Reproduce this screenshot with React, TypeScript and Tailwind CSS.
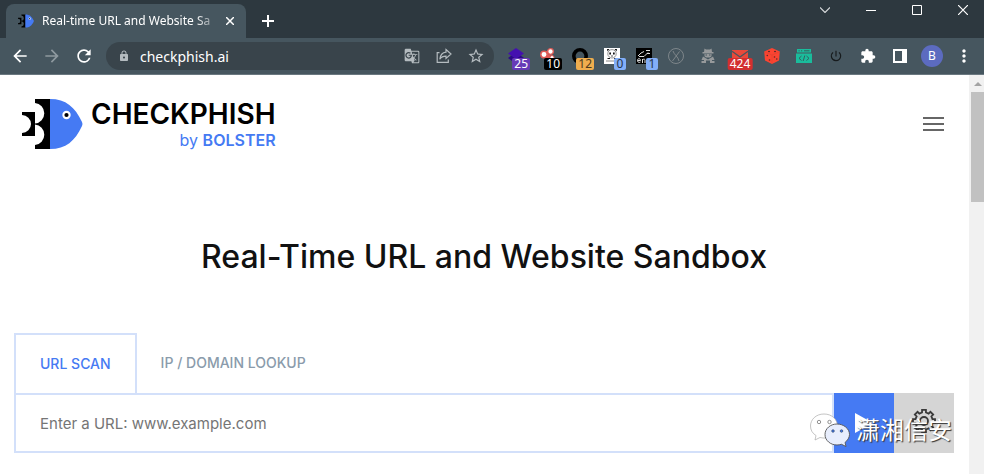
import React from "react";
import {
  MdArrowBack,
  MdArrowForward,
  MdExtension,
  MdGTranslate,
  MdLock,
  MdMoreVert,
  MdPowerSettingsNew,
  MdRefresh,
  MdStarBorder,
} from "react-icons/md";

const FishMark = ({ className }: { className?: string }) => (
  <svg viewBox="0 0 61 50" className={className} aria-hidden="true">
    <path
      d="M13 0H29V50H13V46A10.300 10.300 0 0 0 13 25.500V37H0V34A9 9 0 0 0 0 16V13H13V24.500A10.300 10.300 0 0 0 13 4Z"
      fill="#000"
    />
    <path d="M28 0C44 0 53 8 60 23Q61 25 60 27C53 42 44 50 28 50Z" fill="#457af3" />
    <circle cx="44.500" cy="16" r="4.200" fill="#fff" />
    <circle cx="44.500" cy="16" r="2.100" fill="#000" />
  </svg>
);

const ShareIcon = () => (
  <svg viewBox="0 0 16 16" className="size-4" fill="none" stroke="#b4bbbf" strokeWidth="1.200">
    <path d="M3.500 4.700H1.200V14.300H12.300V11.500" />
    <path d="M10 1.500L15 6L10 10.500V8.200C7 8.200 5 9.300 3.800 11.300C4.200 7.500 6.300 4.600 10 4.200Z" />
  </svg>
);

// outline of a cog with eight teeth, centred on 12,12
const cogPoints = Array.from({ length: 8 }, (_, i) =>
  [
    [-13, 8.7],
    [-10, 11.2],
    [10, 11.2],
    [13, 8.7],
  ].map(([offset, r]) => {
    const a = ((i * 45 + offset) * Math.PI) / 180;
    return `${(12 + r * Math.sin(a)).toFixed(2)},${(12 - r * Math.cos(a)).toFixed(2)}`;
  })
)
  .flat()
  .join(" ");

type Extension = {
  name: string;
  icon: React.ReactNode;
  badge?: string;
  badgeClass?: string;
};

const extensions: Extension[] = [
  {
    name: "Layers",
    badge: "25",
    badgeClass: "bg-[#673ab7] text-white",
    icon: (
      <>
        <path d="M8 4L16 10L8 16L0 10Z" fill="#2c0a86" />
        <path d="M8 0L16 5.500L8 11L0 5.500Z" fill="#4410b0" />
      </>
    ),
  },
  {
    name: "Molecules",
    badge: "10",
    badgeClass: "bg-black text-white",
    icon: (
      <>
        <path d="M5 6L11 3M5 7L13 11" stroke="#e05a55" strokeWidth="4" />
        <circle cx="4" cy="6.500" r="3.200" fill="#fff" stroke="#e05a55" strokeWidth="1.500" />
        <circle cx="10.500" cy="3.500" r="2.800" fill="#fff" stroke="#e05a55" strokeWidth="1.300" />
        <circle cx="12" cy="9.500" r="2" fill="#fff" stroke="#e05a55" />
      </>
    ),
  },
  {
    name: "Ring",
    badge: "12",
    badgeClass: "bg-[#f0ad4e] text-[#4d3a1c]",
    icon: <circle cx="8" cy="8" r="6.200" fill="none" stroke="#000" strokeWidth="3.600" />,
  },
  {
    name: "Panda",
    badge: "0",
    badgeClass: "bg-[#82aef8] text-[#27364d]",
    icon: (
      <>
        <path d="M0 0H16V16H0Z" fill="#fff" />
        <circle cx="8" cy="5.800" r="4.200" fill="none" stroke="#666" strokeWidth="0.700" />
        <path
          d="M3 1H5.500L3.500 3.500ZM13 1H10.500L12.500 3.500ZM5.300 4.500H7V6.500H5.300ZM9 4.500H10.700V6.500H9ZM7.300 7.500H8.700V8.500H7.300ZM3.500 10H6V11H3.500ZM10 10H12.500V11H10Z"
          fill="#111"
        />
        <path d="M2 13H11" stroke="#888" />
      </>
    ),
  },
  {
    name: "Encoder",
    badge: "1",
    badgeClass: "bg-[#82aef8] text-[#27364d]",
    icon: (
      <>
        <path d="M0 0H16V16H0Z" fill="#000" />
        <path
          d="M2 8L5 5L8 3.500M3 8.500H8L12 4.500M10 2.500H14M11 5.500H14M1.500 12.500H4.500C4.500 10 1.500 10 1.500 12.500C1.500 15 4 14.500 4.500 14M6.500 15V11M6.500 12C8 10.500 9 11 9 12.500V15"
          fill="none"
          stroke="#ddd"
          strokeWidth="1"
        />
      </>
    ),
  },
  {
    name: "Crossed circle",
    icon: (
      <g fill="none" stroke="#858b8f" strokeWidth="0.900">
        <circle cx="8" cy="8" r="7.500" />
        <path d="M5 3C5.500 6 10.500 9 11 13M11.500 3.500L4.500 13" />
      </g>
    ),
  },
  {
    name: "Hacker",
    icon: (
      <g fill="#96999b">
        <path d="M4.500 0.500L6 1.500H10L11.500 0.500L12 4H13.500V5.500H2.500V4H4Z" />
        <path d="M4.500 6H11.500V7.500C11.500 9 10.500 9.500 8 9.500C5.500 9.500 4.500 9 4.500 7.500Z" />
        <path d="M3 8.500L5.500 10L8 11.500L10.500 10L13 8.500L14.500 12H12V13H14.500V15H10V12.500H6V15H1.500V13H4V12H1.500Z" />
        <path d="M5.500 6.500H7V7.500H5.500ZM9 6.500H10.500V7.500H9Z" fill="#46565f" />
      </g>
    ),
  },
  {
    name: "Mail",
    badge: "424",
    badgeClass: "bg-[#d32f2f] text-white",
    icon: (
      <>
        <path d="M0 2H16V14H0Z" fill="#e8493a" />
        <path d="M0 3.200L8 9L16 3.200" fill="none" stroke="#46565f" strokeWidth="1.300" />
      </>
    ),
  },
  {
    name: "Dice",
    icon: (
      <>
        <path d="M8 0L15.800 3.500L15 12.500L8 16L1 12.500L0.200 3.500Z" fill="#fb4431" />
        <path d="M1 4L8 7L15 4M8 7V15.500" fill="none" stroke="#d8402f" strokeWidth="0.500" />
        <g fill="#5b2c29">
          <ellipse cx="5" cy="3.500" rx="1.100" ry="0.700" />
          <ellipse cx="11" cy="3.500" rx="1.100" ry="0.700" />
          <circle cx="3.300" cy="7.500" r="0.800" />
          <circle cx="5.500" cy="12" r="0.800" />
          <circle cx="10.500" cy="9" r="0.800" />
          <circle cx="12.800" cy="11" r="0.800" />
        </g>
      </>
    ),
  },
  {
    name: "Code window",
    icon: (
      <>
        <path d="M1 1H15V4.500H1ZM0 5.500H16V15H0Z" fill="#1abc9c" />
        <path
          d="M5.500 8L3 10.300L5.500 12.500M10.500 8L13 10.300L10.500 12.500M8.800 7.500L7.200 13M2.500 2.800H3.700M5 2.800H6.200M8 2.800H13.500"
          fill="none"
          stroke="#34605f"
        />
      </>
    ),
  },
];

const ExtensionButton = ({ name, icon, badge, badgeClass }: Extension) => (
  <button aria-label={name} className="relative flex size-8 shrink-0 items-center justify-center">
    <svg viewBox="0 0 16 16" className="size-4">
      {icon}
    </svg>
    {badge && (
      <span
        className={`absolute bottom-0.5 flex h-3 min-w-3 items-center justify-center rounded-xs px-0.5 text-[12px] leading-3 ${
          badge.length > 2 ? "left-1/2 -translate-x-1/2" : "right-0.5"
        } ${badgeClass}`}
      >
        {badge}
      </span>
    )}
  </button>
);

const toolButton = "flex size-8 shrink-0 items-center justify-center";
const windowButton = "flex w-2.5 items-center justify-center";

const TabStrip = () => (
  <div className="flex h-[38px] bg-[#2d383f] pl-1.5 text-white">
    <div className="mt-1 flex w-60 items-center rounded-t-lg bg-[#46565f] pl-3 pr-2">
      <FishMark className="h-3.5 w-4 shrink-0" />
      <span className="ml-2 flex-1 whitespace-nowrap mask-r-from-85% text-[12px]">
        Real-time URL and Website Sa
      </span>
      <button aria-label="Close tab" className="flex size-4 items-center justify-center">
        <svg viewBox="0 0 8 8" className="size-2" stroke="#fff" strokeWidth="1.500">
          <path d="M0 0L8 8M8 0L0 8" />
        </svg>
      </button>
    </div>
    <button aria-label="New tab" className="mt-1 flex w-11 items-center justify-center">
      <svg viewBox="0 0 12 12" className="size-3" stroke="#fff" strokeWidth="2">
        <path d="M6 0V12M0 6H12" />
      </svg>
    </button>
    <div className="ml-auto mr-4 flex h-5 gap-9">
      <button aria-label="Search tabs" className={windowButton}>
        <svg viewBox="0 0 10 6" className="h-1.5 w-2.5" fill="none" stroke="#d5d8da" strokeWidth="1.200">
          <path d="M0 0.500L5 5.500L10 0.500" />
        </svg>
      </button>
      <button aria-label="Minimize" className={windowButton}>
        <svg viewBox="0 0 10 10" className="size-2.5" fill="#fff">
          <path d="M0 5H10V6H0Z" />
        </svg>
      </button>
      <button aria-label="Maximize" className={windowButton}>
        <svg viewBox="0 0 10 10" className="size-2.5" fill="none" stroke="#fff">
          <path d="M0.500 0.500H9.500V9.500H0.500Z" />
        </svg>
      </button>
      <button aria-label="Close" className={windowButton}>
        <svg viewBox="0 0 10 10" className="size-2.5" fill="none" stroke="#fff" strokeWidth="1.200">
          <path d="M0 0L10 10M10 0L0 10" />
        </svg>
      </button>
    </div>
  </div>
);

const Toolbar = () => (
  <div className="flex h-[37px] items-center border-b border-[#6a7880] bg-[#46565f] px-1 text-white">
    <button aria-label="Back" className={toolButton}>
      <MdArrowBack className="size-5" />
    </button>
    <button aria-label="Forward" className={`${toolButton} text-[#8e999f]`}>
      <MdArrowForward className="size-5" />
    </button>
    <button aria-label="Reload" className={toolButton}>
      <MdRefresh className="size-5" />
    </button>
    <div className="ml-1.5 flex h-7 min-w-0 flex-1 items-center rounded-full bg-[#39444b] pl-3 pr-0.5">
      <MdLock className="size-3 shrink-0 text-[#b4bbbf]" />
      <input
        aria-label="Address"
        defaultValue="checkphish.ai"
        className="ml-2.5 min-w-0 flex-1 bg-transparent text-[14px] outline-none"
      />
      <button aria-label="Translate" className={toolButton}>
        <MdGTranslate className="size-4 text-[#b4bbbf]" />
      </button>
      <button aria-label="Share" className={toolButton}>
        <ShareIcon />
      </button>
      <button aria-label="Bookmark" className={toolButton}>
        <MdStarBorder className="size-[18px] text-[#b4bbbf]" />
      </button>
    </div>
    <div className="ml-1.5 flex">
      {extensions.map((ext) => (
        <ExtensionButton key={ext.name} {...ext} />
      ))}
      <button aria-label="Power" className={toolButton}>
        <MdPowerSettingsNew className="size-3.5 text-[#171b1d]" />
      </button>
      <button aria-label="Extensions" className={toolButton}>
        <MdExtension className="size-4" />
      </button>
      <button aria-label="Side panel" className={toolButton}>
        <svg viewBox="0 0 14 14" className="size-3.5">
          <path fillRule="evenodd" d="M0 0H14V14H0ZM2 2V12H9V2Z" fill="#fff" />
        </svg>
      </button>
      <button aria-label="Profile" className={toolButton}>
        <span className="flex size-[22px] items-center justify-center rounded-full bg-[#5c6bc0] text-[12px]">
          B
        </span>
      </button>
      <button aria-label="Menu" className={toolButton}>
        <MdMoreVert className="size-5" />
      </button>
    </div>
  </div>
);

const Scrollbar = () => (
  <div className="w-[15px] shrink-0 bg-[#f1f1f1] pl-0.5">
    <div className="flex h-[17px] items-center justify-center">
      <svg viewBox="0 0 8 4" className="h-1 w-2">
        <path d="M4 0L8 4H0Z" fill="#a3a3a3" />
      </svg>
    </div>
    <div className="h-[110px] bg-[#c1c1c1]" />
  </div>
);

const Watermark = () => (
  <div className="pointer-events-none absolute right-0.5 top-4 flex items-center gap-1.5">
    <svg viewBox="0 0 40 36" className="h-9 w-10">
      <path
        d="M14 3C6 3 0.500 8.500 0.500 15C0.500 19 2.500 22.500 6 24.500L5 29L10 26.500C12 27 14 27.200 16 27C22 26.500 27.500 21.500 27.500 15C27.500 8.500 22 3 14 3Z"
        fill="#fff"
        stroke="#aaa"
        strokeWidth="0.700"
      />
      <path
        d="M27 13C20.500 13 15 17.500 15 23.500C15 29.500 20.500 34 27 34C28.500 34 30 33.700 31.500 33.300L36 35.500L35 31.500C37.500 29.500 39.500 26.500 39.500 23.500C39.500 17.500 33.500 13 27 13Z"
        fill="#e8eefd"
        stroke="#555"
        strokeWidth="0.900"
      />
      <g fill="#fff" stroke="#777" strokeWidth="0.800">
        <circle cx="9" cy="11" r="1.700" />
        <circle cx="19.500" cy="11" r="1.700" />
      </g>
      <g fill="#457af3" stroke="#345" strokeWidth="0.600">
        <circle cx="23" cy="20" r="1.300" />
        <circle cx="31.500" cy="20" r="1.300" />
      </g>
    </svg>
    <span className="font-['Noto_Sans_CJK_SC',sans-serif] text-[24px] leading-10 text-white [text-shadow:1px_1px_1px_#333]">
      潇湘信安
    </span>
  </div>
);

const ScanForm = () => (
  <section className="mt-14">
    <div className="flex text-[14px] font-medium leading-5">
      <button className="h-[60px] border-2 border-b-0 border-[#d3e0fa] px-6 text-[#457af3]">
        URL SCAN
      </button>
      <button className="px-6 text-[#8a9bab]">IP / DOMAIN LOOKUP</button>
    </div>
    <form className="relative flex h-[60px]" onSubmit={(e) => e.preventDefault()}>
      <input
        aria-label="URL"
        placeholder="Enter a URL: www.example.com"
        className="min-w-0 flex-1 border-2 border-[#d3e0fa] px-6 pt-0.5 text-[15px] text-[#757575] outline-none placeholder:text-[#757575]"
      />
      <button aria-label="Scan" className="flex w-[60px] items-center justify-center bg-[#457af3]">
        <svg viewBox="0 0 18 20" className="h-5 w-[18px]">
          <path d="M0 0L18 10L0 20Z" fill="#fff" />
        </svg>
      </button>
      <button aria-label="Settings" className="flex w-[60px] items-center justify-center bg-[#d5d5d5] pb-1">
        <svg viewBox="0 0 24 24" className="size-6" fill="none" stroke="#3a3a3a" strokeWidth="1.800">
          <polygon points={cogPoints} />
          <circle cx="12" cy="12" r="4" />
        </svg>
      </button>
      <Watermark />
    </form>
  </section>
);

const App = () => {
  return (
    <div className="flex min-h-screen flex-col bg-white font-['Noto_Sans',sans-serif]">
      <TabStrip />
      <Toolbar />
      <div className="flex flex-1">
        <main className="min-w-0 flex-1 pl-3.5 pr-[15px] font-[Inter,sans-serif]">
          <header className="flex items-center justify-between pl-2 pr-2.5 pt-[23px]">
            <a href="/" className="flex items-center gap-2">
              <FishMark className="h-[50px] w-[61px]" />
              <div className="text-right">
                <div className="text-[28px] font-semibold leading-8 text-black">CHECKPHISH</div>
                <div className="text-[16px] leading-5 text-[#457af3]">
                  by <span className="font-semibold">BOLSTER</span>
                </div>
              </div>
            </a>
            <button aria-label="Open menu" className="flex w-[21px] flex-col gap-1">
              <span className="h-0.5 bg-[#666]" />
              <span className="h-0.5 bg-[#666]" />
              <span className="h-0.5 bg-[#666]" />
            </button>
          </header>
          <h1 className="mt-[87px] text-center text-[32px] font-medium leading-10 text-[#111]">
            Real-Time URL and Website Sandbox
          </h1>
          <ScanForm />
        </main>
        <Scrollbar />
      </div>
    </div>
  );
};

export default App;
